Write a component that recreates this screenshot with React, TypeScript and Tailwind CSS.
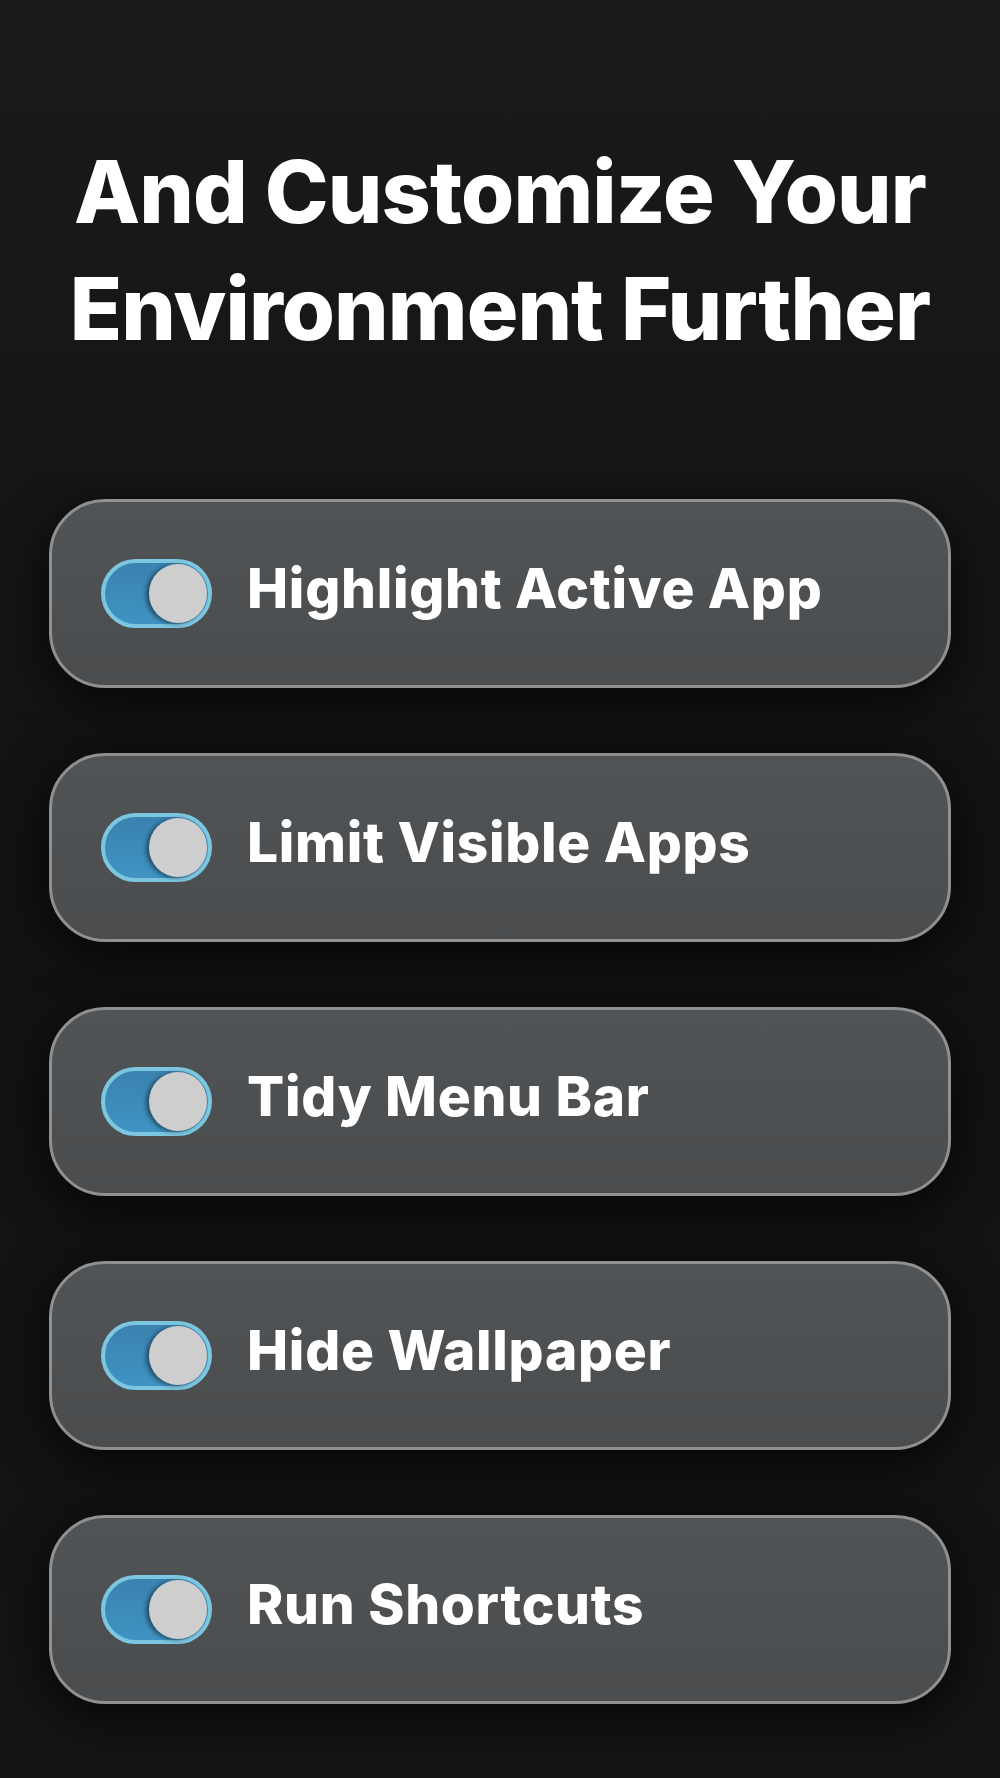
const items = [
  "Highlight Active App",
  "Limit Visible Apps",
  "Tidy Menu Bar",
  "Hide Wallpaper",
  "Run Shortcuts",
];

function Toggle() {
  return (
    <div className="relative h-[69px] w-[111px] shrink-0 rounded-full border-[4px] border-[#7cc6df] bg-gradient-to-b from-[#3a82b0] to-[#3f93c3]">
      <div className="absolute right-[1px] top-[1px] h-[59px] w-[58px] rounded-full bg-[#cecece] shadow-[-3px_1px_4px_rgba(0,0,0,0.45)]" />
    </div>
  );
}

function SettingCard({ label }: { label: string }) {
  return (
    <div className="flex h-[189px] items-center gap-[35px] rounded-[56px] border-[3px] border-[#909090] bg-gradient-to-b from-[#515456] to-[#4a4c4e] pl-[49px] shadow-[0_10px_50px_rgba(0,0,0,0.75)]">
      <Toggle />
      <span className="mt-[-10px] text-[55px] font-extrabold leading-none tracking-[0.7px] text-white">
        {label}
      </span>
    </div>
  );
}

export default function App() {
  return (
    <div
      className="min-h-[1778px] w-[1000px] bg-gradient-to-b from-[#1a1a1a] via-[#121212] to-[#141414] pt-[134px]"
      style={{ fontFamily: "Inter, 'Noto Sans', sans-serif" }}
    >
      <h1 className="text-center text-[86px] font-extrabold leading-[117px] tracking-[-0.9px] text-white">
        And Customize Your
        <br />
        Environment Further
      </h1>
      <div className="mx-[49px] mt-[131px] flex flex-col gap-[65px]">
        {items.map((label) => (
          <SettingCard key={label} label={label} />
        ))}
      </div>
    </div>
  );
}
